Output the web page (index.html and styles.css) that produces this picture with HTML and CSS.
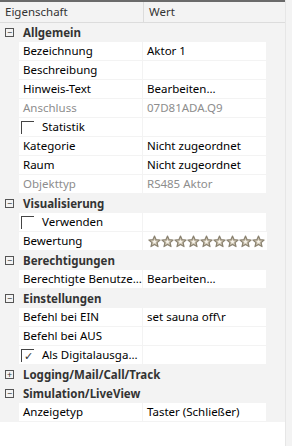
FILE: index.html
```html
<!DOCTYPE html>
<html lang="de">
<head>
    <meta charset="UTF-8">
    <title>Eigenschaften</title>
    <link rel="stylesheet" href="styles.css">
</head>
<body>
    <div class="grid">
        <div class="head">
            <div class="head-name">Eigenschaft</div>
            <div class="head-val">Wert</div>
        </div>

        <div class="cat"><span class="box">&minus;</span>Allgemein</div>
        <div class="row"><div class="name">Bezeichnung</div><div class="val">Aktor 1</div></div>
        <div class="row"><div class="name">Beschreibung</div><div class="val"></div></div>
        <div class="row"><div class="name">Hinweis-Text</div><div class="val">Bearbeiten...</div></div>
        <div class="row off"><div class="name">Anschluss</div><div class="val">07D81ADA.Q9</div></div>
        <div class="row"><div class="name"><span class="check"></span>Statistik</div><div class="val"></div></div>
        <div class="row"><div class="name">Kategorie</div><div class="val">Nicht zugeordnet</div></div>
        <div class="row"><div class="name">Raum</div><div class="val">Nicht zugeordnet</div></div>
        <div class="row off"><div class="name">Objekttyp</div><div class="val">RS485 Aktor</div></div>

        <div class="cat"><span class="box">&minus;</span>Visualisierung</div>
        <div class="row"><div class="name"><span class="check"></span>Verwenden</div><div class="val"></div></div>
        <div class="row"><div class="name">Bewertung</div><div class="val stars" id="stars"></div></div>

        <div class="cat"><span class="box">&minus;</span>Berechtigungen</div>
        <div class="row"><div class="name">Berechtigte Benutze...</div><div class="val">Bearbeiten...</div></div>

        <div class="cat"><span class="box">&minus;</span>Einstellungen</div>
        <div class="row"><div class="name">Befehl bei EIN</div><div class="val">set sauna off\r</div></div>
        <div class="row"><div class="name">Befehl bei AUS</div><div class="val"></div></div>
        <div class="row"><div class="name"><span class="check">&#10003;</span>Als Digitalausga...</div><div class="val"></div></div>

        <div class="cat"><span class="box">+</span>Logging/Mail/Call/Track</div>
        <div class="cat"><span class="box">&minus;</span>Simulation/LiveView</div>
        <div class="row"><div class="name">Anzeigetyp</div><div class="val">Taster (Schließer)</div></div>

        <div class="desc"></div>
    </div>

    <script>
        // nine empty rating stars
        const star = '<svg width="13" height="13" viewBox="0 0 13 13"><path d="M6.5 1 L8.1 4.7 L12.1 5 L9.1 7.6 L10 11.6 L6.5 9.5 L3 11.6 L3.9 7.6 L0.9 5 L4.9 4.7 Z" fill="#c9c0ad" stroke="#8a8270" stroke-width="1.2" stroke-linejoin="round"/><path d="M6.5 4.6 L7.2 6.1 L8.7 6.2 L7.6 7.2 L7.9 8.7 L6.5 7.9 L5.1 8.7 L5.4 7.2 L4.3 6.2 L5.8 6.1 Z" fill="#f6f3ea"/></svg>';
        document.getElementById('stars').innerHTML = star.repeat(9);
    </script>
</body>
</html>
```

FILE: styles.css
```css
body {
    margin: 0;
    background: #f3f3f3;
    font-family: "Noto Sans", sans-serif;
    font-size: 11.5px;
    color: #000;
    width: 292px;
    height: 446px;
    overflow: hidden;
}
.grid {
    width: 285px;
    height: 446px;
    background: #f3f3f3;
    border-right: 1px solid #e6e6e6;
}
.head {
    display: flex;
    height: 20px;
    border-top: 2px solid #6a6a6a;
    border-bottom: 1px solid #dcdcdc;
    color: #333;
    line-height: 20px;
}
.head-name {
    width: 138px;
    padding-left: 5px;
    border-right: 1px solid #dcdcdc;
}
.head-val {
    padding-left: 5px;
}
.cat {
    display: flex;
    align-items: center;
    height: 19px;
    font-weight: bold;
    color: #333;
    white-space: nowrap;
}
.box {
    width: 7px;
    height: 7px;
    border: 1px solid #555;
    margin: 0 9px 0 5px;
    font-size: 9px;
    line-height: 7px;
    text-align: center;
    font-weight: normal;
    color: #333;
}
.row {
    display: flex;
    height: 18px;
    margin-bottom: 1px;
    line-height: 18px;
    white-space: nowrap;
}
.name {
    display: flex;
    align-items: center;
    width: 119px;
    margin-left: 19px;
    padding-left: 4px;
    background: #fff;
    overflow: hidden;
}
.val {
    width: 119px;
    margin-left: 1px;
    padding-left: 4px;
    background: #fff;
    overflow: hidden;
}
.off .name,
.off .val {
    color: #8d8d8d;
}
.check {
    width: 12px;
    height: 12px;
    border-top: 1px solid #444;
    border-left: 1px solid #444;
    margin: 0 8px 0 -2px;
    font-size: 11px;
    line-height: 12px;
    text-align: center;
    color: #333;
}
.stars {
    display: flex;
    align-items: center;
    padding-left: 5px;
}
.stars svg {
    display: block;
}
.desc {
    height: 30px;
    background: #fff;
}
```
